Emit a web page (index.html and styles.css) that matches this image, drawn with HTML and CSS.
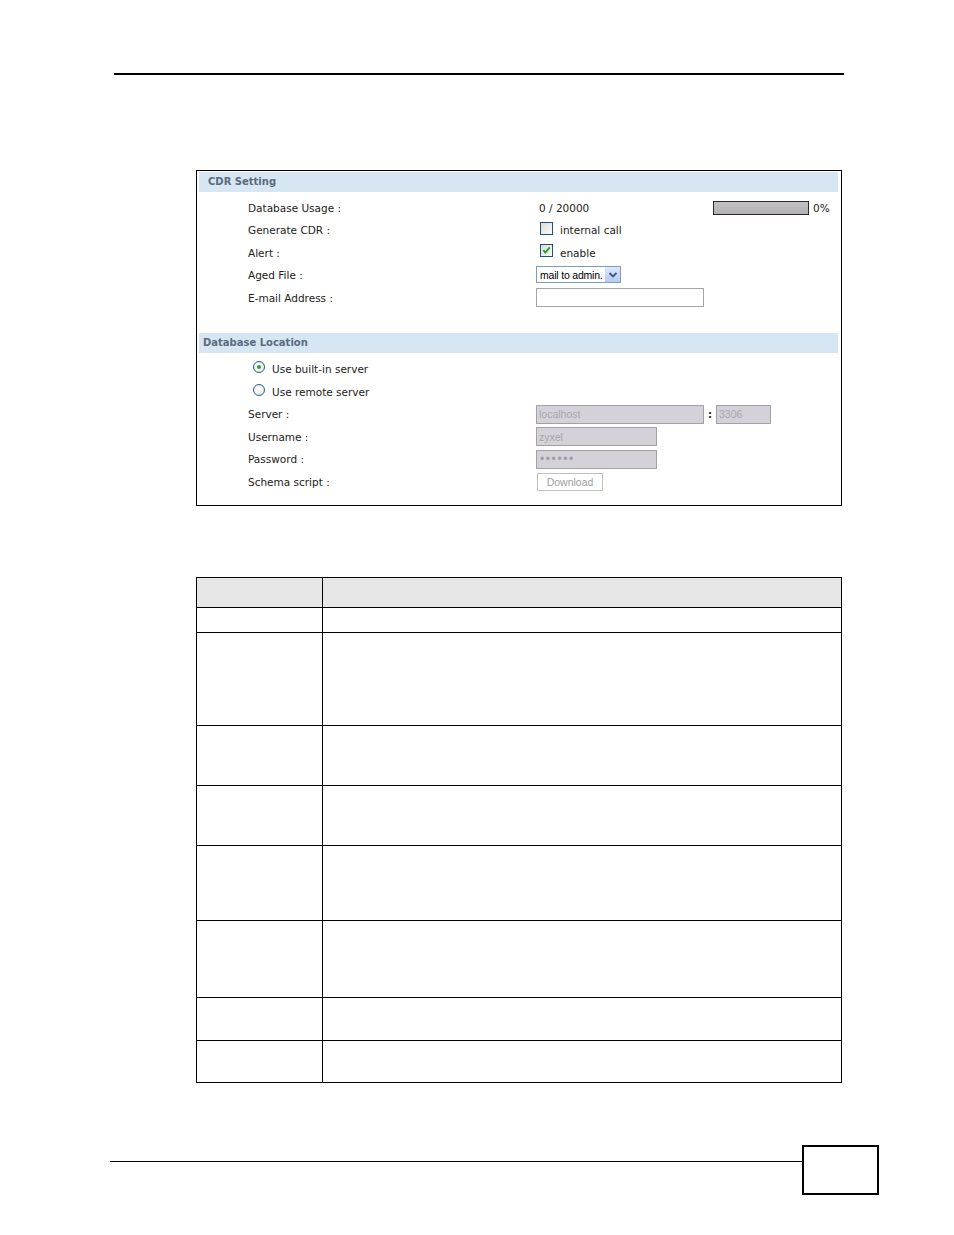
FILE: index.html
```html
<!DOCTYPE html>
<html>
<head>
<meta charset="utf-8">
<link rel="stylesheet" href="styles.css">
</head>
<body>
<div class="page">
  <div class="top-rule"></div>

  <div class="shot">
    <div class="sec-head">CDR Setting</div>
    <div class="rows first">
      <div class="row">
        <div class="lbl">Database Usage :</div>
        <div class="val">
          <span class="usage">0 / 20000</span>
          <span class="bar"></span>
          <span class="pct">0%</span>
        </div>
      </div>
      <div class="row">
        <div class="lbl">Generate CDR :</div>
        <div class="val"><span class="cb"></span><span class="cb-text">internal call</span></div>
      </div>
      <div class="row">
        <div class="lbl">Alert :</div>
        <div class="val"><span class="cb checked"><svg viewBox="0 0 11 11" width="11" height="11"><path d="M2.3 5.2 L4.4 7.6 L8.7 2.4" fill="none" stroke="#21a121" stroke-width="1.8"/></svg></span><span class="cb-text">enable</span></div>
      </div>
      <div class="row">
        <div class="lbl">Aged File :</div>
        <div class="val"><span class="select"><span class="sel-text">mail to admin.</span><span class="sel-btn"><svg viewBox="0 0 14 14" width="14" height="14"><path d="M3.5 5 L7 8.5 L10.5 5" fill="none" stroke="#3d5a8c" stroke-width="1.8"/></svg></span></span></div>
      </div>
      <div class="row">
        <div class="lbl">E-mail Address :</div>
        <div class="val"><span class="input email"></span></div>
      </div>
    </div>

    <div class="sec-head second">Database Location</div>
    <div class="rows">
      <div class="row">
        <div class="radio-line"><span class="radio on"></span><span>Use built-in server</span></div>
      </div>
      <div class="row">
        <div class="radio-line"><span class="radio"></span><span>Use remote server</span></div>
      </div>
      <div class="row">
        <div class="lbl">Server :</div>
        <div class="val"><span class="input dis server">localhost</span><span class="colon">:</span><span class="input dis port">3306</span></div>
      </div>
      <div class="row">
        <div class="lbl">Username :</div>
        <div class="val"><span class="input dis short">zyxel</span></div>
      </div>
      <div class="row">
        <div class="lbl">Password :</div>
        <div class="val"><span class="input dis short pw">&#8226;&#8226;&#8226;&#8226;&#8226;&#8226;</span></div>
      </div>
      <div class="row">
        <div class="lbl">Schema script :</div>
        <div class="val"><span class="btn">Download</span></div>
      </div>
    </div>
  </div>

  <table class="desc">
    <tr class="h"><td class="c1"></td><td></td></tr>
    <tr class="r1"><td class="c1"></td><td></td></tr>
    <tr class="r2"><td class="c1"></td><td></td></tr>
    <tr class="r3"><td class="c1"></td><td></td></tr>
    <tr class="r4"><td class="c1"></td><td></td></tr>
    <tr class="r5"><td class="c1"></td><td></td></tr>
    <tr class="r6"><td class="c1"></td><td></td></tr>
    <tr class="r7"><td class="c1"></td><td></td></tr>
    <tr class="r8"><td class="c1"></td><td></td></tr>
  </table>

  <div class="footer">
    <div class="foot-line"></div>
    <div class="page-box"></div>
  </div>
</div>
</body>
</html>
```

FILE: styles.css
```css
html, body {
  margin: 0;
  padding: 0;
  background: #ffffff;
}
.page {
  width: 954px;
  height: 1235px;
  overflow: hidden;
  display: flow-root;
  font-family: "DejaVu Sans", Verdana, sans-serif;
  color: #222;
}
.top-rule {
  margin: 73px 0 0 114px;
  width: 730px;
  height: 1.5px;
  background: #000;
}
.shot {
  margin: 95px 0 0 196px;
  width: 639px;
  border: 1px solid #000;
  padding: 1px 3px 12px 2px;
}
.sec-head {
  height: 20px;
  line-height: 20px;
  background: #d7e6f3;
  color: #5a6b80;
  font-weight: bold;
  font-size: 10px;
  padding-left: 9px;
}
.sec-head.second {
  margin-top: 24px;
  padding-left: 4px;
}
.rows {
  padding-top: 5px;
}
.row {
  height: 22.5px;
  display: flex;
  align-items: center;
  font-size: 10.5px;
}
.lbl {
  width: 337px;
  padding-left: 49px;
  box-sizing: border-box;
  flex: none;
}
.val {
  display: flex;
  align-items: center;
}
.usage {
  width: 174px;
  padding-left: 3px;
}
.bar {
  width: 94px;
  height: 12px;
  border: 1px solid #2a2a2a;
  background: linear-gradient(#c3c1c5, #b3b1b5);
}
.pct {
  margin-left: 4px;
}
.cb {
  width: 11px;
  height: 11px;
  border: 1px solid #1e4f82;
  background: linear-gradient(135deg, #dcdcd6, #fbfbf9);
  margin-left: 4px;
  margin-top: -4px;
  display: inline-flex;
}
.cb-text {
  margin-left: 7px;
}
.select {
  display: flex;
  width: 85px;
  height: 17px;
  border: 1px solid #7f9db9;
  box-sizing: border-box;
  background: #fff;
  align-items: center;
  font-family: "Liberation Sans", Arial, sans-serif;
  font-size: 10.5px;
  color: #000;
  margin-top: -1px;
}
.sel-text {
  flex: 1;
  padding-left: 3px;
  letter-spacing: -0.2px;
}
.sel-btn {
  width: 15px;
  height: 15px;
  background: linear-gradient(#dce7fb, #b6cbf3);
  border-left: 1px solid #fff;
  display: flex;
  align-items: center;
  justify-content: center;
}
.input {
  display: flex;
  align-items: center;
  height: 19px;
  border: 1px solid #a5a5a5;
  box-sizing: border-box;
  background: #fff;
  font-family: "Liberation Sans", Arial, sans-serif;
  font-size: 10.5px;
  padding-left: 2px;
}
.email {
  width: 168px;
}
.dis {
  background: #d5d1d9;
  border-color: #a3a1a7;
  color: #a9a6ad;
}
.server {
  width: 168px;
}
.colon {
  width: 12px;
  text-align: center;
  font-weight: bold;
  font-size: 10px;
}
.port {
  width: 55px;
}
.short {
  width: 121px;
}
.pw {
  font-size: 12px;
  letter-spacing: 1.6px;
  padding-left: 3px;
  color: #a09da7;
}
.btn {
  display: flex;
  align-items: center;
  justify-content: center;
  margin-left: 1px;
  width: 66px;
  height: 18px;
  box-sizing: border-box;
  border: 1px solid #c0c0c0;
  font-family: "Liberation Sans", Arial, sans-serif;
  font-size: 10.5px;
  color: #a0a0a0;
  background: #fff;
}
.radio-line {
  display: flex;
  align-items: center;
  padding-left: 54px;
}
.radio-line span + span {
  margin-left: 7px;
}
.radio {
  width: 10px;
  height: 10px;
  border: 1px solid #2c5a8a;
  border-radius: 50%;
  background: radial-gradient(circle at 40% 40%, #ffffff, #e4e4de);
  margin-top: -4px;
  position: relative;
}
.radio.on::after {
  content: "";
  position: absolute;
  left: 3px;
  top: 3px;
  width: 4px;
  height: 4px;
  border-radius: 50%;
  background: #2aa12a;
}
.desc {
  margin: 71px 0 0 196px;
  width: 646px;
  border-collapse: collapse;
}
.desc td {
  border: 1px solid #000;
  padding: 0;
}
.desc .c1 {
  width: 125px;
}
.desc tr.h td { height: 29px; background: #e6e6e6; }
.desc tr.r1 td { height: 24px; }
.desc tr.r2 td { height: 92px; }
.desc tr.r3 td { height: 59px; }
.desc tr.r4 td { height: 59px; }
.desc tr.r5 td { height: 74px; }
.desc tr.r6 td { height: 76px; }
.desc tr.r7 td { height: 42px; }
.desc tr.r8 td { height: 41px; }
.footer {
  display: flex;
  margin: 62px 0 0 110px;
}
.foot-line {
  width: 692px;
  height: 1px;
  background: #000;
  margin-top: 16px;
}
.page-box {
  width: 73px;
  height: 46px;
  border: 2px solid #000;
}
```
